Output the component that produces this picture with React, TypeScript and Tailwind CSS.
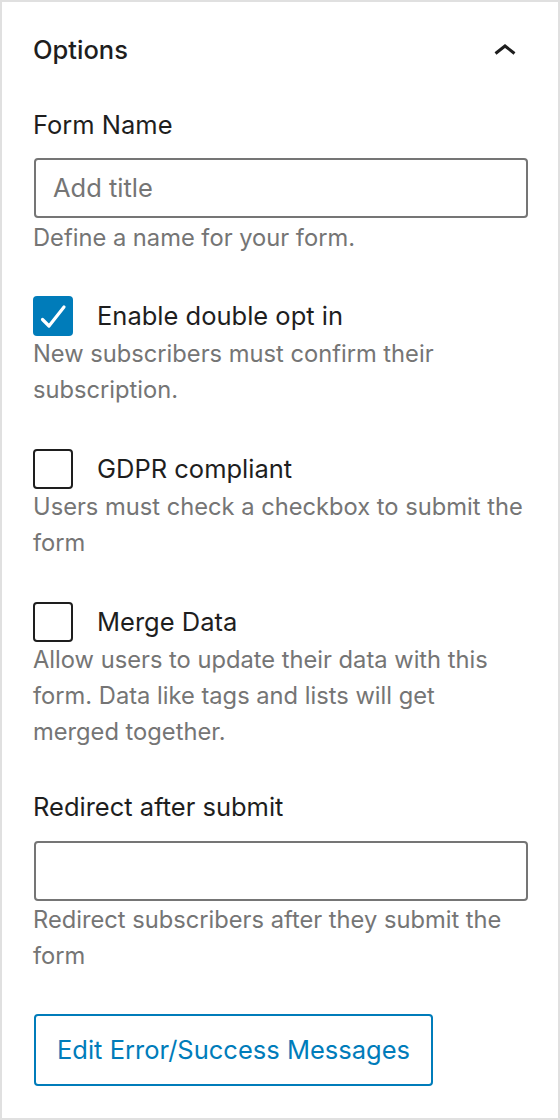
import React from 'react';

const font = { fontFamily: 'Inter, "Noto Sans", sans-serif' };

function Checkbox({ checked }: { checked?: boolean }) {
    return checked ? (
        <span className="flex h-[40px] w-[40px] shrink-0 items-center justify-center rounded-[4px] bg-[#007cba]">
            <svg width="40" height="40" viewBox="0 0 40 40" fill="none">
                <path d="M9.5 23.5 L16 30 L31 11" stroke="#fff" strokeWidth="3.2" strokeLinecap="round" strokeLinejoin="round" />
            </svg>
        </span>
    ) : (
        <span className="block h-[40px] w-[40px] shrink-0 rounded-[4px] border-2 border-[#1e1e1e] bg-white" />
    );
}

function CheckOption({ label, help, checked }: { label: string; help: string; checked?: boolean }) {
    return (
        <div>
            <div className="flex items-center gap-[24px]">
                <Checkbox checked={checked} />
                <span className="text-[25.5px] leading-[36px] text-[#1e1e1e]">{label}</span>
            </div>
            <p className="mr-[3px] text-[23.7px] leading-[36px] text-[#757575]">{help}</p>
        </div>
    );
}

export default function App() {
    return (
        <div className="h-[1120px] w-[560px] bg-[#e0e0e0] p-[2px]" style={font}>
            <div className="h-full w-full bg-white pl-[31px] pr-[30px] pt-[30px]">
                {/* Header */}
                <div className="flex items-center justify-between">
                    <h2 className="text-[25.5px] font-medium leading-[36px] text-[#1e1e1e]">Options</h2>
                    <svg width="24" height="14" viewBox="0 0 24 14" fill="none" className="mr-[11px]">
                        <path d="M2.5 10.5 L12 3 L21.5 10.5" stroke="#1e1e1e" strokeWidth="3" />
                    </svg>
                </div>

                {/* Form name */}
                <div className="mt-[39px]">
                    <label className="block text-[25.5px] leading-[36px] text-[#1e1e1e]">Form Name</label>
                    <div className="mt-[15px] ml-[1px] flex h-[60px] items-center rounded-[4px] border-2 border-[#757575] px-[17px]">
                        <span className="text-[25.5px] text-[#757575]">Add title</span>
                    </div>
                    <p className="mt-[2px] text-[23.7px] leading-[36px] text-[#757575]">Define a name for your form.</p>
                </div>

                <div className="mt-[40px] flex flex-col gap-[41px]">
                    <CheckOption checked label="Enable double opt in" help="New subscribers must confirm their subscription." />
                    <CheckOption label="GDPR compliant" help="Users must check a checkbox to submit the form" />
                    <CheckOption label="Merge Data" help="Allow users to update their data with this form. Data like tags and lists will get merged together." />
                </div>

                {/* Redirect */}
                <div className="mt-[39px]">
                    <label className="block text-[25.5px] leading-[36px] text-[#1e1e1e]">Redirect after submit</label>
                    <div className="mt-[16px] ml-[1px] h-[60px] rounded-[4px] border-2 border-[#757575]" />
                    <p className="mt-[1px] text-[23.7px] leading-[36px] text-[#757575]">Redirect subscribers after they submit the form</p>
                </div>

                <button className="mt-[40px] ml-[1px] flex h-[72px] items-center rounded-[4px] border-2 border-[#007cba] px-[21px] text-[25.5px] text-[#007cba]">
                    Edit Error/Success Messages
                </button>
            </div>
        </div>
    );
}
